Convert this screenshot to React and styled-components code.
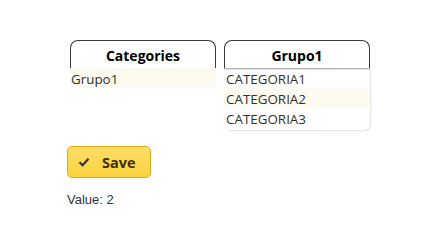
import styled, { createGlobalStyle } from "styled-components";

const GlobalStyle = createGlobalStyle`
  body {
    margin: 0;
    background: #fff;
    font-family: "Open Sans", "Noto Sans", sans-serif;
  }
`;

const groups = ["Grupo1"];
const categories = ["CATEGORIA1", "CATEGORIA2", "CATEGORIA3"];

const Page = styled.div`
  padding: 40px 0 0 67px;
`;

const Columns = styled.div`
  display: flex;
  gap: 8px;
  padding-left: 3px;
  align-items: flex-start;
`;

const Column = styled.div`
  width: 146px;
  display: flex;
  flex-direction: column;
`;

const Header = styled.div`
  height: 27px;
  border: 1px solid #3a3a3a;
  border-bottom: none;
  border-radius: 8px 8px 0 0;
  text-align: center;
  font-weight: 700;
  font-size: 14px;
  line-height: 29px;
  color: #000;
`;

const List = styled.ul`
  list-style: none;
  margin: 0;
  padding: 0 0 ${(p) => (p.$framed ? 2 : 0)}px;
  border-radius: 0 0 6px 6px;
  overflow: hidden;
  box-shadow: ${(p) =>
    p.$framed
      ? "inset 0 2px 2px -1px #9a9a9a, 1px 1px 2px rgba(0,0,0,0.12)"
      : "inset 1px 0 1px -1px #bbb"};
`;

const Item = styled.li`
  height: 20px;
  line-height: 22px;
  padding-left: ${(p) => (p.$indent ? 2 : 1)}px;
  font-size: 13.4px;
  color: #2f2f2f;
  background: ${(p) => (p.$active ? "#fdfaef" : "transparent")};
`;

const SaveButton = styled.button`
  margin-top: 16px;
  display: flex;
  align-items: center;
  gap: 12px;
  width: 84px;
  height: 32px;
  padding: 0 0 0 10px;
  border: 1px solid #e4a910;
  border-radius: 5px;
  background: linear-gradient(#fedd69, #fcd23d);
  font-family: "Open Sans", "Noto Sans", sans-serif;
  font-weight: 700;
  font-size: 14.5px;
  color: #3b3000;
  cursor: pointer;
`;

const Value = styled.div`
  margin-top: 14px;
  font-family: "Liberation Sans", Arial, sans-serif;
  font-size: 13px;
  color: #333;
`;

function Check() {
  return (
    <svg width="12" height="10" viewBox="0 0 12 10">
      <path
        d="M1.5 5.2 L4.6 8.2 L10.5 1.8"
        fill="none"
        stroke="#333"
        strokeWidth="2.2"
      />
    </svg>
  );
}

export default function App() {
  return (
    <Page>
      <GlobalStyle />
      <Columns>
        <Column>
          <Header>Categories</Header>
          <List>
            {groups.map((g) => (
              <Item key={g} $active>
                {g}
              </Item>
            ))}
          </List>
        </Column>
        <Column>
          <Header>Grupo1</Header>
          <List $framed>
            {categories.map((c, i) => (
              <Item key={c} $indent $active={i === 1}>
                {c}
              </Item>
            ))}
          </List>
        </Column>
      </Columns>
      <SaveButton>
        <Check />
        Save
      </SaveButton>
      <Value>Value: 2</Value>
    </Page>
  );
}
